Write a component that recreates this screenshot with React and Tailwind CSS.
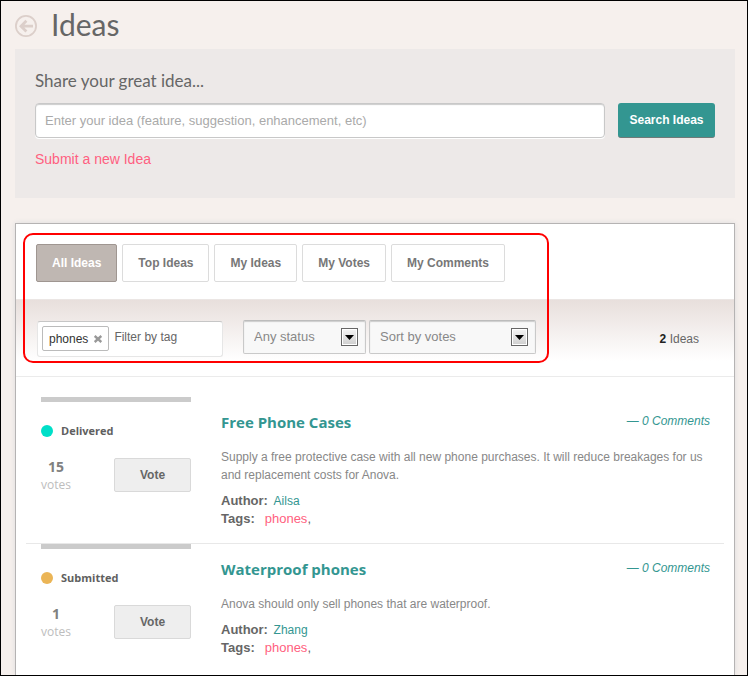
import React from "react";

const tabs = ["All Ideas", "Top Ideas", "My Ideas", "My Votes", "My Comments"];

const ideas = [
  {
    status: "Delivered",
    dot: "bg-[#00dfc8]",
    votes: 15,
    title: "Free Phone Cases",
    text: "Supply a free protective case with all new phone purchases. It will reduce breakages for us and replacement costs for Anova.",
    author: "Ailsa",
  },
  {
    status: "Submitted",
    dot: "bg-[#ebb556]",
    votes: 1,
    title: "Waterproof phones",
    text: "Anova should only sell phones that are waterproof.",
    author: "Zhang",
  },
];

function DropDown({ label, value, width }) {
  return (
    <div className={`relative h-[34px] ${width}`}>
      <select
        aria-label={label}
        className="h-full w-full appearance-none rounded-[2px] border border-[#c9c9c9] border-t-[#bcbcbc] bg-[#f8f8f8] pr-8 pl-[10px] text-[13px] text-[#888] shadow-[inset_0_1px_1px_#ccc]"
      >
        <option>{value}</option>
      </select>
      <span className="pointer-events-none absolute top-2 right-2 flex h-[18px] w-[17px] items-center justify-center border border-[#666] bg-linear-to-b from-[#f4f4f4] to-[#cfcfcf] shadow-[inset_0_0_0_1px_#fff]">
        <svg width="9" height="5" viewBox="0 0 9 5" aria-hidden="true">
          <path d="M0 0h9L4.5 5z" fill="#000" />
        </svg>
      </span>
    </div>
  );
}

function Idea({ idea, first }) {
  return (
    <li
      className={`mx-[10px] flex pl-[15px] ${first ? "mt-5 h-[146px]" : "border-t border-[#e8e8e8]"}`}
    >
      <div className="w-[150px] shrink-0">
        <div className="h-[5px] bg-[#cbcbcb]" />
        <div className="mt-[19px] flex h-5 items-center gap-2">
          <span className={`h-3 w-3 rounded-full ${idea.dot}`} />
          <span className="font-['Open_Sans',sans-serif] text-[11px] font-bold text-[#5f5f5f]">
            {idea.status}
          </span>
        </div>
        <div className="mt-[17px] flex justify-between">
          <div className="font-['Open_Sans',sans-serif]">
            <div className="text-center text-[14px] leading-[18px] font-bold text-[#808080]">
              {idea.votes}
            </div>
            <div className="text-[12px] leading-[18px] text-[#bdbdbd]">votes</div>
          </div>
          <button className="h-[34px] w-[77px] rounded-[2px] border border-[#d9d9d9] bg-[#eee] text-[12px] font-bold text-[#666]">
            Vote
          </button>
        </div>
      </div>
      <div className="ml-[30px] min-w-0 flex-1 pt-[13px] pr-[14px]">
        <div className="flex items-start justify-between">
          <h3 className="font-['Open_Sans',sans-serif] text-[15px] leading-6 font-bold text-[#339691]">
            <a href="#idea">{idea.title}</a>
          </h3>
          <a href="#comments" className="text-[12px] leading-[22px] text-[#339691] italic">
            — 0 Comments
          </a>
        </div>
        <p className="mt-[14px] text-[12px] leading-[18px] text-[#888]">{idea.text}</p>
        <p className="mt-2 text-[13px] leading-[18px]">
          <b className="mr-[2px] text-[#666]">Author:</b>{" "}
          <a href="#author" className="text-[12px] text-[#339691]">
            {idea.author}
          </a>
        </p>
        <p className="text-[13px] leading-[18px]">
          <b className="mr-[10px] text-[#666]">Tags:</b>
          <a href="#tag" className="text-[#ff5f80]">
            phones
          </a>
          <span className="text-[#666]">,</span>
        </p>
      </div>
    </li>
  );
}

export default function App() {
  return (
    <div className="flex h-screen flex-col overflow-hidden border border-black bg-[#f6f0ed] pr-3 pl-[14px] font-['Liberation_Sans',Arial,sans-serif]">
      <header className="flex h-12 shrink-0 items-start gap-[14px]">
        <a href="#back" aria-label="Back" className="mt-[14px]">
          <svg width="22" height="22" viewBox="0 0 22 22" fill="none" stroke="#dccfca" aria-hidden="true">
            <circle cx="11" cy="11" r="10.1" strokeWidth="1.8" />
            <path d="M18 11.2H6M11.4 5.8L6 11.2l5.4 5.4" strokeWidth="2.8" />
          </svg>
        </a>
        <h1 className="font-[Lato,sans-serif] text-[30px] leading-[46px] text-[#666]">Ideas</h1>
      </header>

      <section className="h-[149px] shrink-0 bg-[#ede9e8] px-5 pt-5">
        <h2 className="font-[Lato,sans-serif] text-[17px] leading-6 text-[#666]">
          Share your great idea...
        </h2>
        <form className="mt-[10px] flex gap-[13px]">
          <input
            type="text"
            aria-label="Your idea"
            placeholder="Enter your idea (feature, suggestion, enhancement, etc)"
            className="h-[35px] min-w-0 flex-1 rounded-[4px] border border-[#c8c8c8] bg-white px-[9px] text-[13px] shadow-[inset_0_1px_1px_#ccc,0_1px_0_#fff] placeholder:text-[#aaa]"
          />
          <button
            type="button"
            className="h-[35px] w-[97px] rounded-[3px] border-b border-[#6f7a78] bg-[#339691] text-[12px] font-bold text-white"
          >
            Search Ideas
          </button>
        </form>
        <a href="#new" className="mt-[11px] block text-[14px] leading-5 text-[#ff5f80]">
          Submit a new Idea
        </a>
      </section>

      <main className="relative mt-[25px] flex-1 border border-b-0 border-[#b5b3b3] bg-white shadow-[0_0_5px_#ddd]">
        <nav className="flex gap-[5px] px-5 pt-5 pb-[17px]">
          {tabs.map((tab, i) => (
            <button
              key={tab}
              className={`h-[38px] rounded-[2px] border px-[15px] text-[12px] font-bold ${
                i === 0
                  ? "border-[#9f9691] bg-[#bfb7b2] text-white"
                  : "border-[#dcdcdc] bg-white text-[#777]"
              }`}
            >
              {tab}
            </button>
          ))}
        </nav>

        <div className="flex h-[78px] items-start border-t border-b border-t-[#ebe6e4] border-b-[#ebebeb] bg-linear-to-b from-[#e8dfdc] to-white to-80% pr-[35px] pl-[21px]">
          <div className="mt-[21px] flex h-9 w-[186px] items-start gap-[5px] rounded-[3px] border border-[#e6e6e6] border-t-[#c6c6c6] bg-white p-1">
            <span className="flex h-[25px] shrink-0 items-center gap-[6px] rounded-[2px] border border-[#bbb] px-[6px] text-[12px] text-[#333]">
              phones
              <button aria-label="Remove phones">
                <svg width="8" height="8" viewBox="0 0 8 8" stroke="#999" strokeWidth="2.4" aria-hidden="true">
                  <path d="M.7 1l6.6 6M7.3 1L.7 7" />
                </svg>
              </button>
            </span>
            <input
              type="text"
              aria-label="Filter by tag"
              placeholder="Filter by tag"
              className="h-[21px] w-full min-w-0 text-[12px] placeholder:text-[#666]"
            />
          </div>
          <div className="mt-5 ml-5 flex gap-[3px]">
            <DropDown label="Status" value="Any status" width="w-[123px]" />
            <DropDown label="Sort" value="Sort by votes" width="w-[167px]" />
          </div>
          <p className="mt-[30px] ml-auto text-[12px] leading-[18px] text-[#666]">
            <b className="text-[#222]">2</b> Ideas
          </p>
        </div>

        <ul>
          {ideas.map((idea, i) => (
            <Idea key={idea.title} idea={idea} first={i === 0} />
          ))}
        </ul>

        <div className="pointer-events-none absolute top-[9px] left-[7px] h-[130px] w-[526px] rounded-[10px] border-2 border-[#f00]" />
      </main>
    </div>
  );
}
